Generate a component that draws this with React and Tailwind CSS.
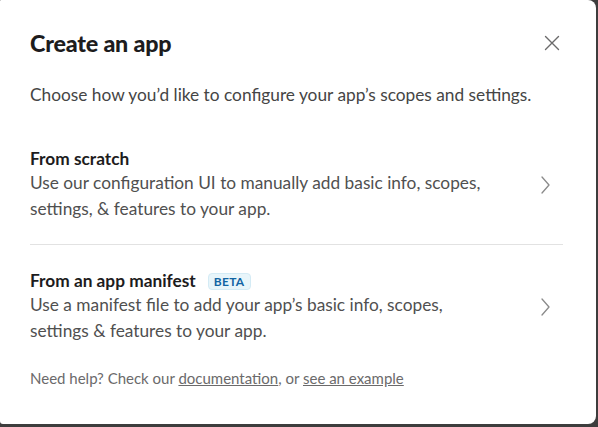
import React from "react";

function Chevron() {
  return (
    <svg width="12" height="20" viewBox="0 0 12 20" fill="none" className="shrink-0">
      <polyline points="3,2 10,10 3,18" stroke="#8a8a8a" strokeWidth="1.3" strokeLinecap="round" strokeLinejoin="round" />
    </svg>
  );
}

function CloseIcon() {
  return (
    <svg width="16" height="16" viewBox="0 0 16 16" fill="none">
      <path d="M1.5 1.5L14.5 14.5M14.5 1.5L1.5 14.5" stroke="#6b6a6b" strokeWidth="1.4" strokeLinecap="round" />
    </svg>
  );
}

function Option({ title, badge, children }) {
  return (
    <div className="flex items-center">
      <div className="w-[462px]">
        <div className="flex items-center gap-[12px] text-[17.3px] leading-[22px] font-bold text-[#1d1c1d]">
          <span>{title}</span>
          {badge && (
            <span className="rounded-[4px] border border-[#d4ebf5] bg-[#e8f5fa] px-[5px] text-[12px] leading-[15px] font-bold tracking-[0.3px] text-[#1264a3]">
              {badge}
            </span>
          )}
        </div>
        <div className="text-[17.3px] leading-[26px] text-[#505050]">{children}</div>
      </div>
      <div className="flex flex-1 justify-end pr-[12px]">
        <Chevron />
      </div>
    </div>
  );
}

export default function App() {
  return (
    <div className="h-[427px] w-[598px] bg-[#3d3d3d]" style={{ fontFamily: "Lato, 'Noto Sans', sans-serif" }}>
      <div className="flex h-[424px] w-[596px] flex-col rounded-tl-[1px] rounded-tr-[8px] rounded-br-[8px] rounded-bl-[3px] bg-white pl-[30px] pr-[33px] pt-[26px]">
        <div className="flex items-center justify-between">
          <h1 className="text-[23.3px] leading-[34px] font-black tracking-[-0.2px] text-[#1d1c1d]">Create an app</h1>
          <div className="mr-[3px]">
            <CloseIcon />
          </div>
        </div>
        <p className="mt-[24px] text-[17.3px] leading-[22px] text-[#454545]">
          Choose how you’d like to configure your app’s scopes and settings.
        </p>
        <div className="mt-[42px] pb-[22px]">
          <Option title="From scratch">
            Use our configuration UI to manually add basic info, scopes, settings, &amp; features to your app.
          </Option>
        </div>
        <div className="border-t border-[#e2e2e2] pt-[25px]">
          <Option title="From an app manifest" badge="BETA">
            Use a manifest file to add your app’s basic info, scopes, settings &amp; features to your app.
          </Option>
        </div>
        <p className="mt-[24px] text-[15px] leading-[20px] text-[#6b6a6b]">
          Need help? Check our <span className="underline">documentation</span>, or{" "}
          <span className="underline">see an example</span>
        </p>
      </div>
    </div>
  );
}
